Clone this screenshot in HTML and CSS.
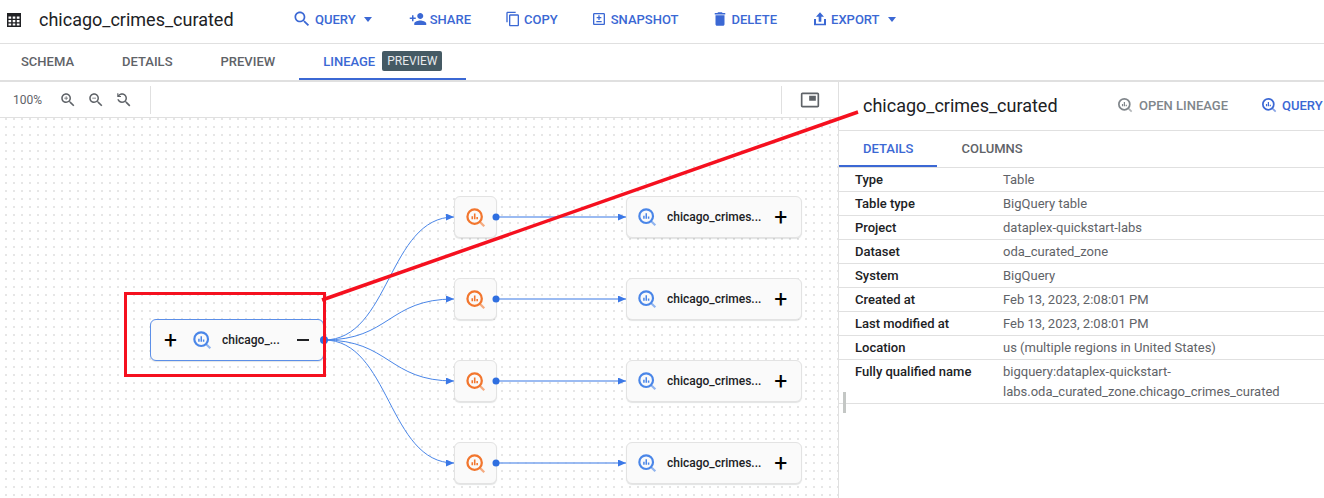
FILE: index.html
```html
<!DOCTYPE html>
<html lang="en">
<head>
  <meta charset="UTF-8" />
  <meta name="viewport" content="width=device-width, initial-scale=1" />
  <title>chicago_crimes_curated</title>
  <link rel="stylesheet" href="styles.css">
</head>
<body>
  <svg class="defs" width="0" height="0">
    <symbol id="i-lens" viewBox="0 0 24 24">
      <circle cx="11" cy="11" r="8.2" fill="none" stroke="currentColor" stroke-width="2.600"/>
      <path d="M17 17l5 5" stroke="currentColor" stroke-opacity="0.6" stroke-width="2.600" fill="none"/>
      <path d="M7.400 10.500h1.800v3.500H7.400zM10.200 7.500h1.800v6.500h-1.800zM13 11.500h1.800V14H13z" fill="currentColor"/>
    </symbol>
    <symbol id="i-search" viewBox="0 0 24 24">
      <path d="M15.500 14h-.79l-.28-.27C15.410 12.590 16 11.110 16 9.500 16 5.910 13.090 3 9.500 3S3 5.910 3 9.500 5.910 16 9.500 16c1.610 0 3.090-.59 4.230-1.570l.27.28v.79l5 4.990L20.490 19l-4.990-5zm-6 0C7.010 14 5 11.990 5 9.500S7.010 5 9.500 5 14 7.010 14 9.500 11.990 14 9.500 14z" fill="currentColor"/>
    </symbol>
  </svg>

  <header class="topbar">
    <svg class="table-icon" width="14" height="14" viewBox="0 0 14 14"><path d="M0 0h14v14H0zM1.500 3.500v2.200h2.700V3.500zm4.200 0v2.200h2.600V3.500zm4.100 0v2.200h2.700V3.500zM1.500 7v2.200h2.700V7zm4.200 0v2.200h2.600V7zm4.100 0v2.200h2.700V7zM1.500 10.500v2h2.700v-2zm4.200 0v2h2.600v-2zm4.100 0v2h2.700v-2z" fill-rule="evenodd" fill="#202124"/></svg>
    <h1 class="title">chicago_crimes_curated</h1>
    <nav class="actions">
      <a class="action action-query">
        <svg width="20" height="20"><use href="#i-search"/></svg>QUERY<span class="caret"></span>
      </a>
      <a class="action action-share">
        <svg width="18" height="18" viewBox="0 0 24 24"><path d="M15 12c2.210 0 4-1.790 4-4s-1.790-4-4-4-4 1.790-4 4 1.790 4 4 4zm-9-2V7H4v3H1v2h3v3h2v-3h3v-2H6zm9 4c-2.670 0-8 1.340-8 4v2h16v-2c0-2.660-5.330-4-8-4z" fill="currentColor"/></svg>SHARE
      </a>
      <a class="action action-copy">
        <svg width="16" height="16" viewBox="0 0 24 24"><path d="M16 1H4c-1.100 0-2 .9-2 2v14h2V3h12V1zm3 4H8c-1.100 0-2 .9-2 2v14c0 1.100.9 2 2 2h11c1.100 0 2-.9 2-2V7c0-1.100-.9-2-2-2zm0 16H8V7h11v14z" fill="currentColor"/></svg>COPY
      </a>
      <a class="action action-snapshot">
        <svg width="16" height="16" viewBox="0 0 24 24"><path d="M19 3H5c-1.100 0-2 .9-2 2v14c0 1.100.9 2 2 2h14c1.100 0 2-.9 2-2V5c0-1.100-.9-2-2-2zm0 16H5V5h14v14zM11 6.500h2v2.500h2.500v2H13v2.500h-2V11H8.500V9H11zM8 15h8v2H8z" fill="currentColor"/></svg>SNAPSHOT
      </a>
      <a class="action action-delete">
        <svg width="18" height="18" viewBox="0 0 24 24"><path d="M6 19c0 1.100.9 2 2 2h8c1.100 0 2-.9 2-2V7H6v12zM19 4h-3.500l-1-1h-5l-1 1H5v2h14V4z" fill="currentColor"/></svg>DELETE
      </a>
      <a class="action action-export">
        <svg width="16" height="16" viewBox="0 0 24 24"><path d="M12 2l-6 6.500h4V16h4V8.500h4zM3 12h3v7h12v-7h3v9.500H3z" fill="currentColor"/></svg>EXPORT<span class="caret"></span>
      </a>
    </nav>
  </header>

  <div class="tabs">
    <a class="tab">SCHEMA</a>
    <a class="tab">DETAILS</a>
    <a class="tab">PREVIEW</a>
    <a class="tab tab-active">LINEAGE <span class="badge">PREVIEW</span></a>
  </div>

  <main class="split">
    <section class="graph">
      <div class="graph-tools">
        <span class="zoom-level">100%</span>
        <svg class="tool" width="18" height="18" viewBox="0 0 24 24"><use href="#i-search"/><path d="M12 10h-2v2H9v-2H7V9h2V7h1v2h2z" fill="currentColor"/></svg>
        <svg class="tool" width="18" height="18" viewBox="0 0 24 24"><use href="#i-search"/><path d="M7 9h5v1H7z" fill="currentColor"/></svg>
        <svg class="tool" width="18" height="18" viewBox="0 0 24 24"><path d="M15.500 14h-.79l-.28-.27C15.410 12.590 16 11.110 16 9.500 16 5.910 13.090 3 9.500 3c-2 0-3.800.9-5 2.300V3H3v5h5V6.500H5.700C6.600 5.500 8 5 9.500 5 12 5 14 7 14 9.500S12 14 9.500 14c-2 0-3.700-1.300-4.300-3H3.100c.6 2.900 3.200 5 6.400 5 1.600 0 3.100-.6 4.200-1.600l.3.300v.8l5 5 1.500-1.500z" fill="currentColor"/></svg>
        <span class="tool-sep"></span>
        <span class="tool-sep tool-sep-right"></span>
        <svg class="minimap" width="20" height="20" viewBox="0 0 24 24"><path d="M19 7h-8v6h8V7zm2-4H3c-1.100 0-2 .9-2 2v14c0 1.100.9 2 2 2h18c1.100 0 2-.89 2-1.980V5c0-1.100-.9-2-2-2zm0 16.010H3V4.980h18v14.030z" fill="currentColor"/></svg>
      </div>

      <div class="canvas">
        <div class="node node-source">
          <span class="plus">+</span>
          <svg class="lens" width="20" height="20"><use href="#i-lens"/></svg>
          <span class="node-name node-name-short">chicago_...</span>
          <span class="minus"></span>
        </div>

        <div class="job job-1"><svg width="21" height="21"><use href="#i-lens"/></svg></div>
        <div class="job job-2"><svg width="21" height="21"><use href="#i-lens"/></svg></div>
        <div class="job job-3"><svg width="21" height="21"><use href="#i-lens"/></svg></div>
        <div class="job job-4"><svg width="21" height="21"><use href="#i-lens"/></svg></div>

        <div class="node node-target job-1">
          <svg class="lens" width="20" height="20"><use href="#i-lens"/></svg>
          <span class="node-name">chicago_crimes...</span>
          <span class="plus">+</span>
        </div>
        <div class="node node-target job-2">
          <svg class="lens" width="20" height="20"><use href="#i-lens"/></svg>
          <span class="node-name">chicago_crimes...</span>
          <span class="plus">+</span>
        </div>
        <div class="node node-target job-3">
          <svg class="lens" width="20" height="20"><use href="#i-lens"/></svg>
          <span class="node-name">chicago_crimes...</span>
          <span class="plus">+</span>
        </div>
        <div class="node node-target job-4">
          <svg class="lens" width="20" height="20"><use href="#i-lens"/></svg>
          <span class="node-name">chicago_crimes...</span>
          <span class="plus">+</span>
        </div>

        <svg class="edges" width="838" height="380" viewBox="0 118 838 380">
          <defs>
            <marker id="arrow" markerWidth="8" markerHeight="7" refX="8" refY="3.500" orient="auto" markerUnits="userSpaceOnUse">
              <path d="M0 0l8 3.500-8 3.500z" fill="#3b78e7"/>
            </marker>
          </defs>
          <g class="edge">
            <path d="M324 340C390 340 388 217 454 217" marker-end="url(#arrow)"/>
            <path d="M324 340C390 340 388 299 454 299" marker-end="url(#arrow)"/>
            <path d="M324 340C390 340 388 381 454 381" marker-end="url(#arrow)"/>
            <path d="M324 340C390 340 388 463 454 463" marker-end="url(#arrow)"/>
            <path class="edge-long" d="M496 217H626" marker-end="url(#arrow)"/>
            <path class="edge-long" d="M496 299H626" marker-end="url(#arrow)"/>
            <path class="edge-long" d="M496 381H626" marker-end="url(#arrow)"/>
            <path class="edge-long" d="M496 463H626" marker-end="url(#arrow)"/>
          </g>
          <g fill="#2f6fe0">
            <circle cx="324" cy="340" r="4"/>
            <circle cx="496" cy="217" r="3.500"/>
            <circle cx="496" cy="299" r="3.500"/>
            <circle cx="496" cy="381" r="3.500"/>
            <circle cx="496" cy="463" r="3.500"/>
          </g>
        </svg>
      </div>
    </section>

    <aside class="panel">
      <div class="panel-head">
        <h2 class="panel-title">chicago_crimes_curated</h2>
        <a class="panel-link panel-link-open"><svg width="16" height="16"><use href="#i-lens"/></svg>OPEN LINEAGE</a>
        <a class="panel-link panel-link-query"><svg width="16" height="16"><use href="#i-lens"/></svg>QUERY</a>
      </div>
      <div class="panel-tabs">
        <a class="panel-tab panel-tab-active">DETAILS</a>
        <a class="panel-tab">COLUMNS</a>
      </div>
      <dl class="facts">
        <div class="fact"><dt>Type</dt><dd>Table</dd></div>
        <div class="fact"><dt>Table type</dt><dd>BigQuery table</dd></div>
        <div class="fact"><dt>Project</dt><dd>dataplex-quickstart-labs</dd></div>
        <div class="fact"><dt>Dataset</dt><dd>oda_curated_zone</dd></div>
        <div class="fact"><dt>System</dt><dd>BigQuery</dd></div>
        <div class="fact"><dt>Created at</dt><dd>Feb 13, 2023, 2:08:01 PM</dd></div>
        <div class="fact"><dt>Last modified at</dt><dd>Feb 13, 2023, 2:08:01 PM</dd></div>
        <div class="fact"><dt>Location</dt><dd>us (multiple regions in United States)</dd></div>
        <div class="fact"><dt>Fully qualified name</dt><dd>bigquery:dataplex-quickstart-<br>labs.oda_curated_zone.chicago_crimes_curated</dd></div>
      </dl>
      <span class="grip"></span>
    </aside>
  </main>

  <!-- red callout drawn on top of the screenshot -->
  <div class="callout-box"></div>
  <svg class="callout-line" width="1324" height="498">
    <path d="M322 300L858 112" stroke="#f5101f" stroke-width="3.500" fill="none"/>
  </svg>
</body>
</html>
```

FILE: styles.css
```css
* {
  box-sizing: border-box;
}
html, body {
  height: 498px;
  overflow: hidden;
}
body {
  margin: 0;
  position: relative;
  font-family: Roboto, "Liberation Sans", sans-serif;
  color: #202124;
  background: #fff;
}
.defs {
  position: absolute;
}

/* top bar */
.topbar {
  height: 44px;
  display: flex;
  align-items: center;
  padding: 0 0 5px 7px;
  border-bottom: 1px solid #e0e0e0;
}
.table-icon {
  flex: none;
  margin-top: 2px;
}
.title {
  margin: 0 0 0 18px;
  width: 237px;
  font-size: 18px;
  font-weight: 400;
  color: #202124;
}
.actions {
  display: flex;
  align-items: center;
}
.action {
  display: flex;
  align-items: center;
  font-size: 13px;
  font-weight: 500;
  color: #3b68d4;
}
.action-query { gap: 3px; margin-left: 16px; }
.action-share { gap: 3px; margin-left: 37px; }
.action-copy { gap: 3px; margin-left: 34px; }
.action-snapshot { gap: 4px; margin-left: 33px; }
.action-delete { gap: 2px; margin-left: 33px; }
.action-export { gap: 3px; margin-left: 35px; }
.caret {
  width: 0;
  height: 0;
  margin-left: 5px;
  border-left: 4.5px solid transparent;
  border-right: 4.5px solid transparent;
  border-top: 5px solid currentColor;
}

/* tabs */
.tabs {
  height: 38px;
  display: flex;
  border-bottom: 2px solid #e0e0e0;
}
.tab {
  display: flex;
  align-items: center;
  gap: 7px;
  padding: 0 24px;
  font-size: 13px;
  font-weight: 500;
  color: #5f6368;
  border-bottom: 2px solid transparent;
}
.tab:first-child {
  padding-left: 21px;
}
.tab-active {
  color: #3b68d4;
  border-bottom-color: #3b68d4;
}
.badge {
  padding: 3px 5px;
  border-radius: 2px;
  font-size: 12px;
  line-height: 14px;
  font-weight: 400;
  color: #e8eaed;
  background: #455a64;
}

/* graph side */
.split {
  display: flex;
  height: 416px;
}
.graph {
  width: 839px;
  flex: none;
  display: flex;
  flex-direction: column;
  border-right: 1px solid #e0e0e0;
}
.graph-tools {
  height: 36px;
  flex: none;
  display: flex;
  align-items: center;
  padding-left: 13px;
  color: #5f6368;
  border-bottom: 1px solid #e0e0e0;
}
.zoom-level {
  width: 46px;
  font-size: 12px;
}
.tool {
  margin-right: 10px;
  color: #5f6368;
}
.tool-sep {
  width: 1px;
  height: 28px;
  margin-left: 7px;
  background: #e0e0e0;
}
.tool-sep-right {
  margin-left: auto;
}
.minimap {
  margin: 0 18px;
  color: #5f6368;
}
.canvas {
  position: relative;
  flex: 1;
  background-image: radial-gradient(circle at 1px 1px, #e6e6e6 1.4px, transparent 1.4px);
  background-size: 8px 8px;
  background-position: 5px 0;
}
.edges {
  position: absolute;
  left: 0;
  top: 0;
}
.edge path {
  fill: none;
  stroke: #4a86e8;
  stroke-width: 1;
}
.edge .edge-long {
  stroke: #7aa5ee;
  stroke-width: 1.500;
}
.node, .job {
  position: absolute;
  display: flex;
  align-items: center;
  height: 42px;
  background: #fafafa;
  border: 1px solid #e3e3e3;
  border-radius: 6px;
  box-shadow: 0 1px 1px rgba(60, 64, 67, 0.15);
}
.job {
  left: 454px;
  width: 43px;
  justify-content: center;
  color: #f2762e;
}
.job-1 { top: 78px; }
.job-2 { top: 160px; }
.job-3 { top: 242px; }
.job-4 { top: 324px; }
.node-source {
  left: 150px;
  top: 201px;
  width: 174px;
  border-color: #5c8fe8;
  padding-left: 13px;
}
.node.node-target {
  left: 626px;
  width: 176px;
  padding-left: 10px;
  justify-content: flex-start;
  color: #202124;
}
.lens {
  flex: none;
  color: #4a86e8;
}
.node-name {
  margin-left: 10px;
  font-size: 12px;
  font-weight: 500;
  white-space: nowrap;
  color: #202124;
}
.node-name-short {
  margin-left: 10px;
  width: 75px;
}
.node-source .lens {
  margin-left: 15px;
}
.plus {
  font-size: 23px;
  font-weight: 400;
  line-height: 1;
  color: #000;
}
.node-target .plus {
  margin-left: 13px;
}
.minus {
  width: 12px;
  height: 2px;
  background: #202124;
}

/* details panel */
.panel {
  position: relative;
  flex: 1;
}
.panel-head {
  height: 49px;
  display: flex;
  align-items: center;
  padding: 0 0 2px 24px;
  border-bottom: 1px solid #e0e0e0;
}
.panel-title {
  margin: 0;
  width: 254px;
  font-size: 18px;
  font-weight: 400;
  color: #202124;
}
.panel-link {
  display: flex;
  align-items: center;
  font-size: 13px;
  font-weight: 500;
  white-space: nowrap;
}
.panel-link-open {
  gap: 6px;
  color: #80868b;
}
.panel-link-query {
  gap: 5px;
  margin-left: 33px;
  color: #3b68d4;
}
.panel-tabs {
  height: 37px;
  display: flex;
  border-bottom: 1px solid #e0e0e0;
}
.panel-tab {
  display: flex;
  align-items: center;
  padding: 0 24px;
  font-size: 13px;
  font-weight: 500;
  color: #5f6368;
  border-bottom: 2px solid transparent;
}
.panel-tab-active {
  color: #3b68d4;
  border-bottom-color: #3b68d4;
}
.facts {
  margin: 0;
}
.fact {
  display: flex;
  min-height: 24px;
  padding: 5px 0 1px 16px;
  border-bottom: 1px solid #e0e0e0;
  font-size: 13px;
  line-height: 14px;
}
.fact dt {
  width: 148px;
  flex: none;
  font-weight: 500;
  color: #202124;
}
.fact dd {
  margin: -3px 0 0;
  color: #5f6368;
  line-height: 20px;
}
.grip {
  position: absolute;
  left: 4px;
  top: 310px;
  width: 3px;
  height: 21px;
  background: #c4c7c5;
}

/* annotation */
.callout-box {
  position: absolute;
  left: 124px;
  top: 292px;
  width: 202px;
  height: 85px;
  border: 3px solid #f5101f;
}
.callout-line {
  position: absolute;
  left: 0;
  top: 0;
  pointer-events: none;
}
```
